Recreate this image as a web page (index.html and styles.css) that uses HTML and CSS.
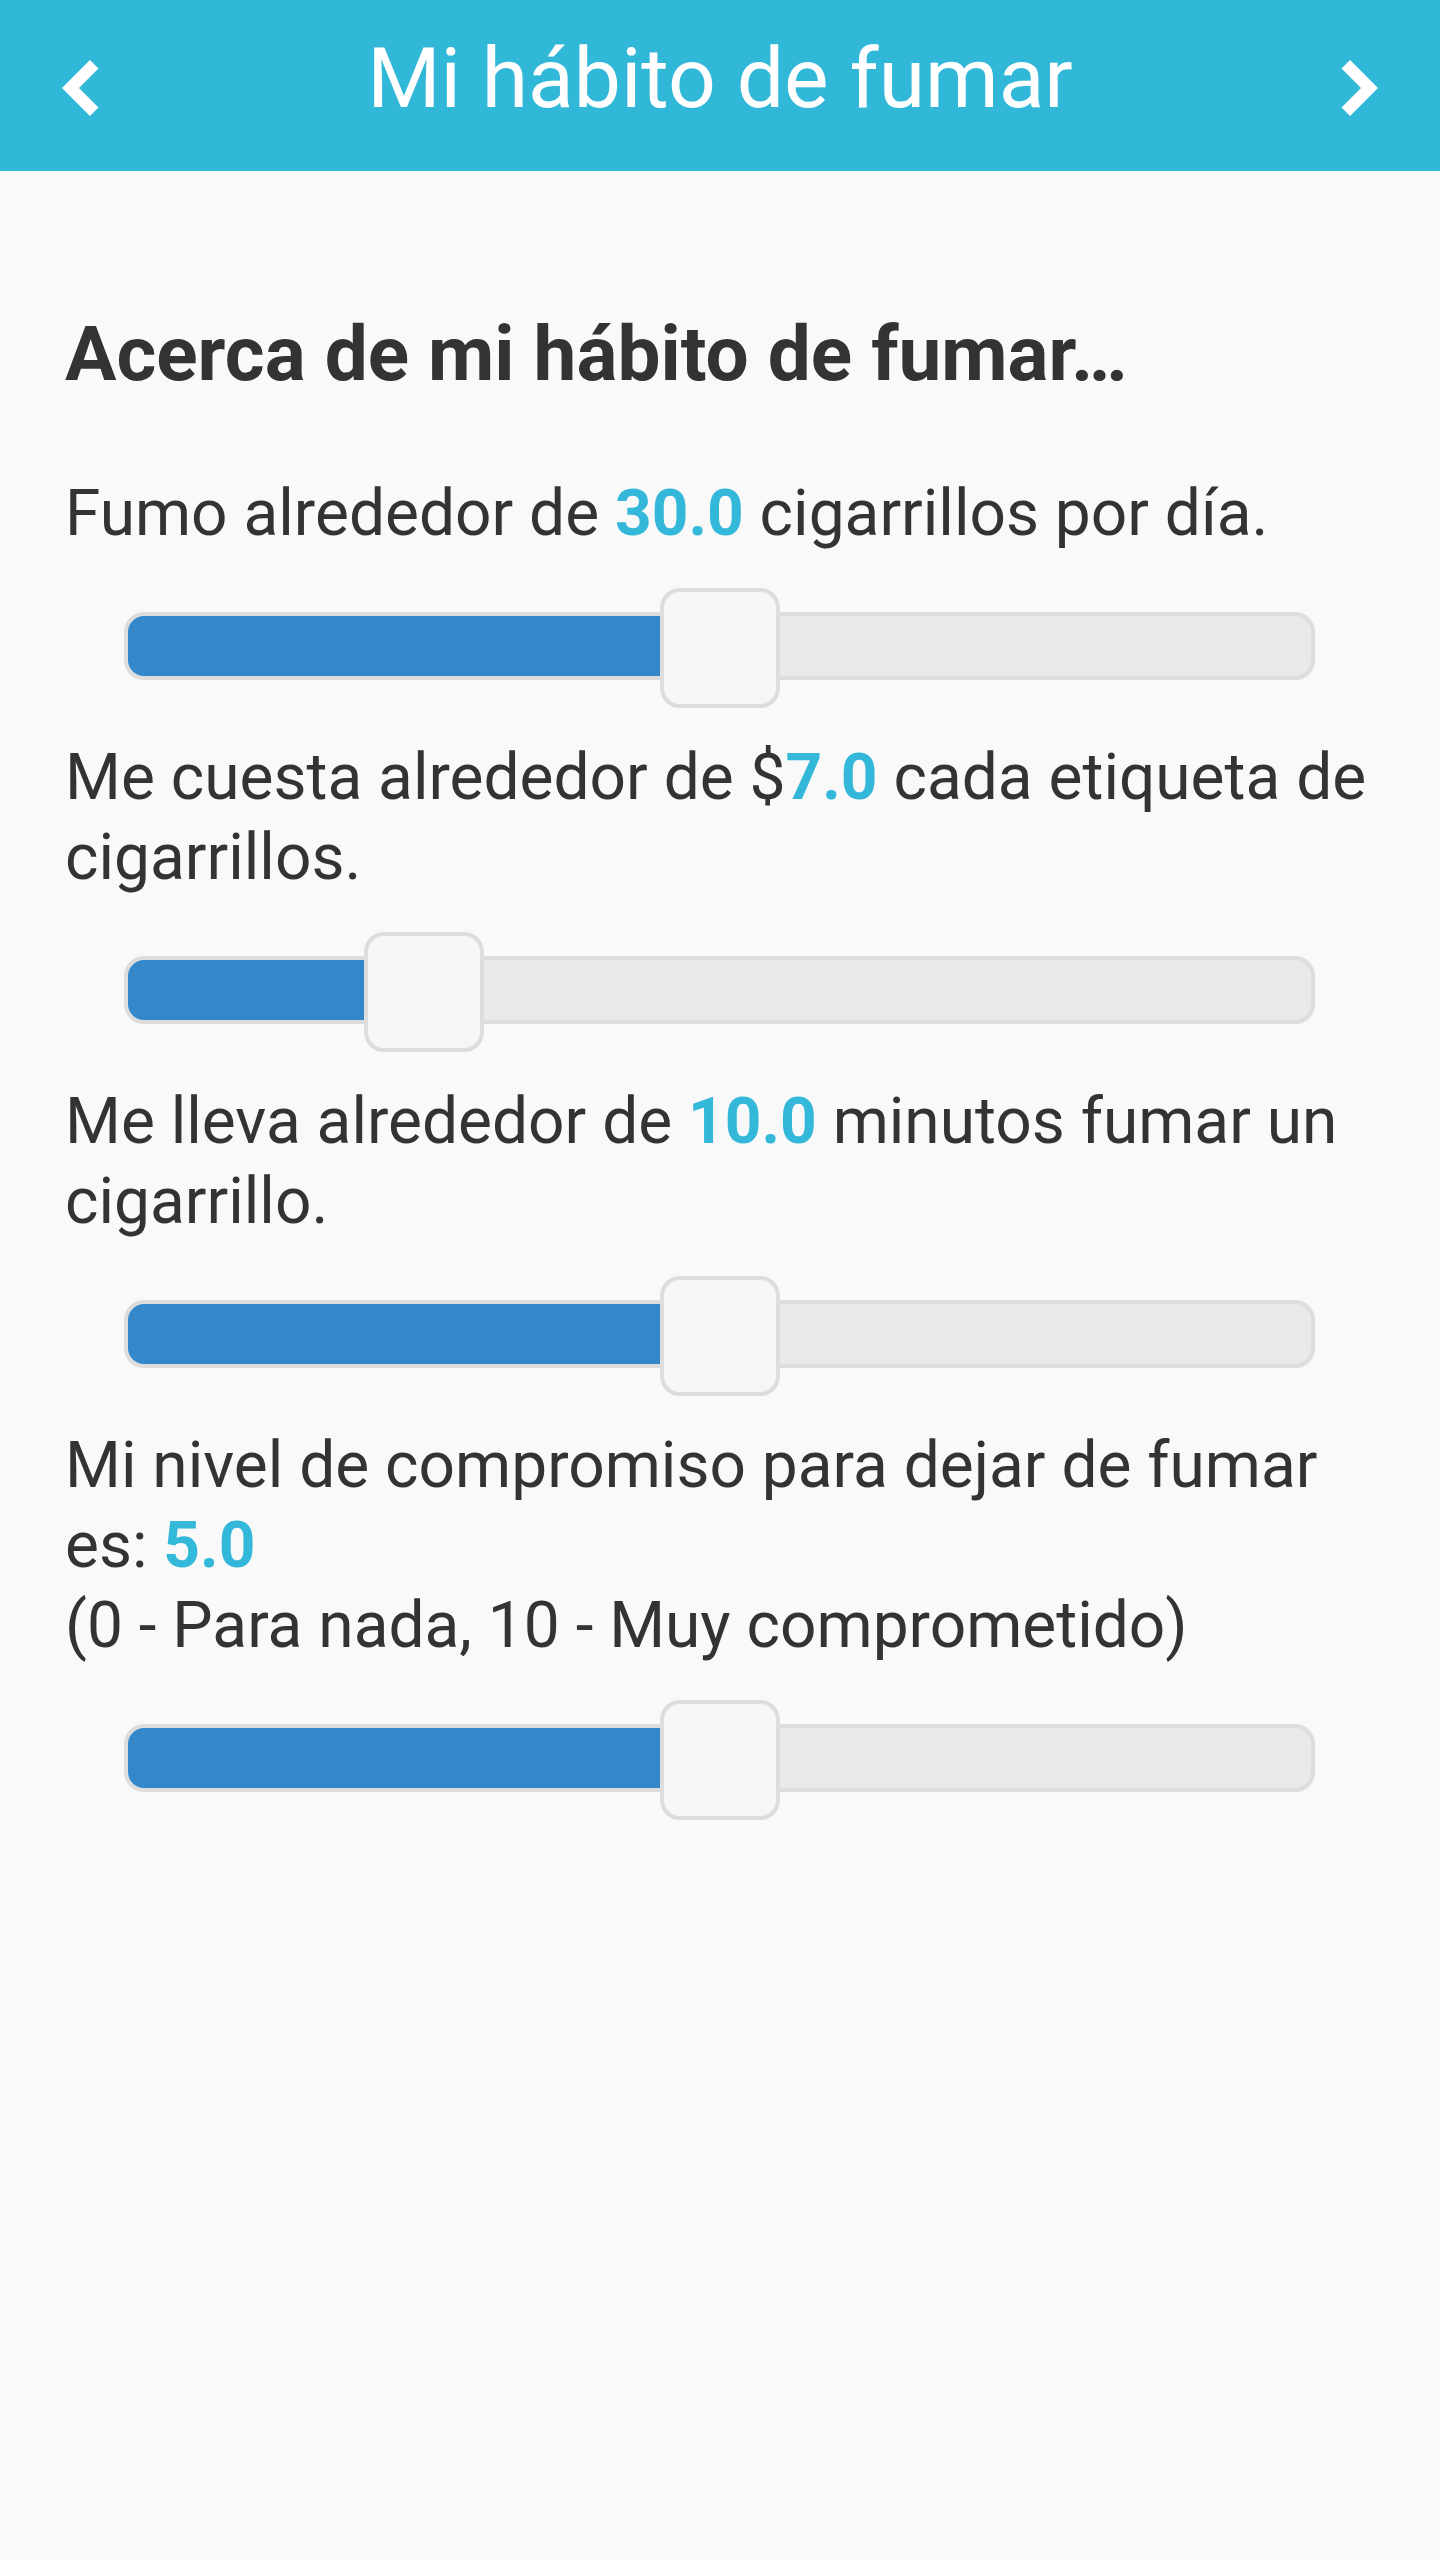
FILE: index.html
```html
<!DOCTYPE html>
<html lang="es">
    <head>
        <meta charset="UTF-8">
        <meta name="viewport" content="width=device-width, initial-scale=1.0">
        <title>Mi hábito de fumar</title>
        <link rel="stylesheet" href="styles.css">
    </head>
    <body>
        <div id="App">
            <div id="Header">
                <svg class="Arrow" viewBox="0 0 48 72" width="48" height="72">
                    <path d="M38.2 12.2 L14.5 36 L38.2 59.8"/>
                </svg>
                <h1 class="Title">Mi hábito de fumar</h1>
                <svg class="Arrow" viewBox="0 0 48 72" width="48" height="72">
                    <path d="M9.8 12.2 L33.5 36 L9.8 59.8"/>
                </svg>
            </div>
            <div id="Content">
                <h2 class="Heading">Acerca de mi hábito de fumar…</h2>

                <p class="Texto">Fumo alrededor de <b class="Value">30.0</b> cigarrillos por día.</p>
                <div class="Track">
                    <div class="Fill" style="width: 50%;"></div>
                    <div class="Thumb" style="left: calc(50% - 60px);"></div>
                </div>

                <p class="Texto">Me cuesta alrededor de $<b class="Value">7.0</b> cada etiqueta de cigarrillos.</p>
                <div class="Track">
                    <div class="Fill" style="width: 25%;"></div>
                    <div class="Thumb" style="left: calc(25% - 60px);"></div>
                </div>

                <p class="Texto">Me lleva alrededor de <b class="Value">10.0</b> minutos fumar un cigarrillo.</p>
                <div class="Track">
                    <div class="Fill" style="width: 50%;"></div>
                    <div class="Thumb" style="left: calc(50% - 60px);"></div>
                </div>

                <p class="Texto">Mi nivel de compromiso para dejar de fumar es: <b class="Value">5.0</b><br>(0 - Para nada, 10 - Muy comprometido)</p>
                <div class="Track">
                    <div class="Fill" style="width: 50%;"></div>
                    <div class="Thumb" style="left: calc(50% - 60px);"></div>
                </div>
            </div>
        </div>
    </body>
</html>
```

FILE: styles.css
```css
* {
    box-sizing: border-box;
    margin: 0px;
    padding: 0px;
}
body {
    background-color: #F9F9F9;
    color: #333333;
    font-family: Roboto, "Noto Sans", sans-serif;
}
#App {
    min-height: 2560px;
}
#Header {
    align-items: center;
    background-color: #31B7D8;
    display: flex;
    height: 171px;
    justify-content: space-between;
    padding: 0px 56px;
    .Arrow {
        fill: none;
        margin-top: 5px;
        stroke: #FFFFFF;
        stroke-width: 12;
    }
    .Title {
        color: #FFFFFF;
        font-size: 84px;
        font-weight: 400;
        line-height: 1.172;
        padding-bottom: 12px;
        text-align: center;
    }
}
#Content {
    padding: 136px 65px 0px;
    .Heading {
        font-size: 76.5px;
        font-weight: 700;
        line-height: 95px;
        margin-bottom: 72px;
    }
    .Texto {
        font-size: 64px;
        line-height: 80px;
    }
    .Value {
        color: #33B8DA;
        font-weight: 700;
    }
    .Track {
        background-color: #E9E9E9;
        border: 4px solid #DDDDDD;
        border-radius: 20px;
        height: 68px;
        margin: 58px 60px 58px 59px;
        position: relative;
        .Fill {
            background-color: #3388CC;
            border-radius: 16px 0px 0px 16px;
            height: 100%;
        }
        .Thumb {
            background-color: #F6F6F6;
            border: 4px solid #DDDDDD;
            border-radius: 20px;
            height: 120px;
            position: absolute;
            top: -28px;
            width: 120px;
        }
    }
}
```
